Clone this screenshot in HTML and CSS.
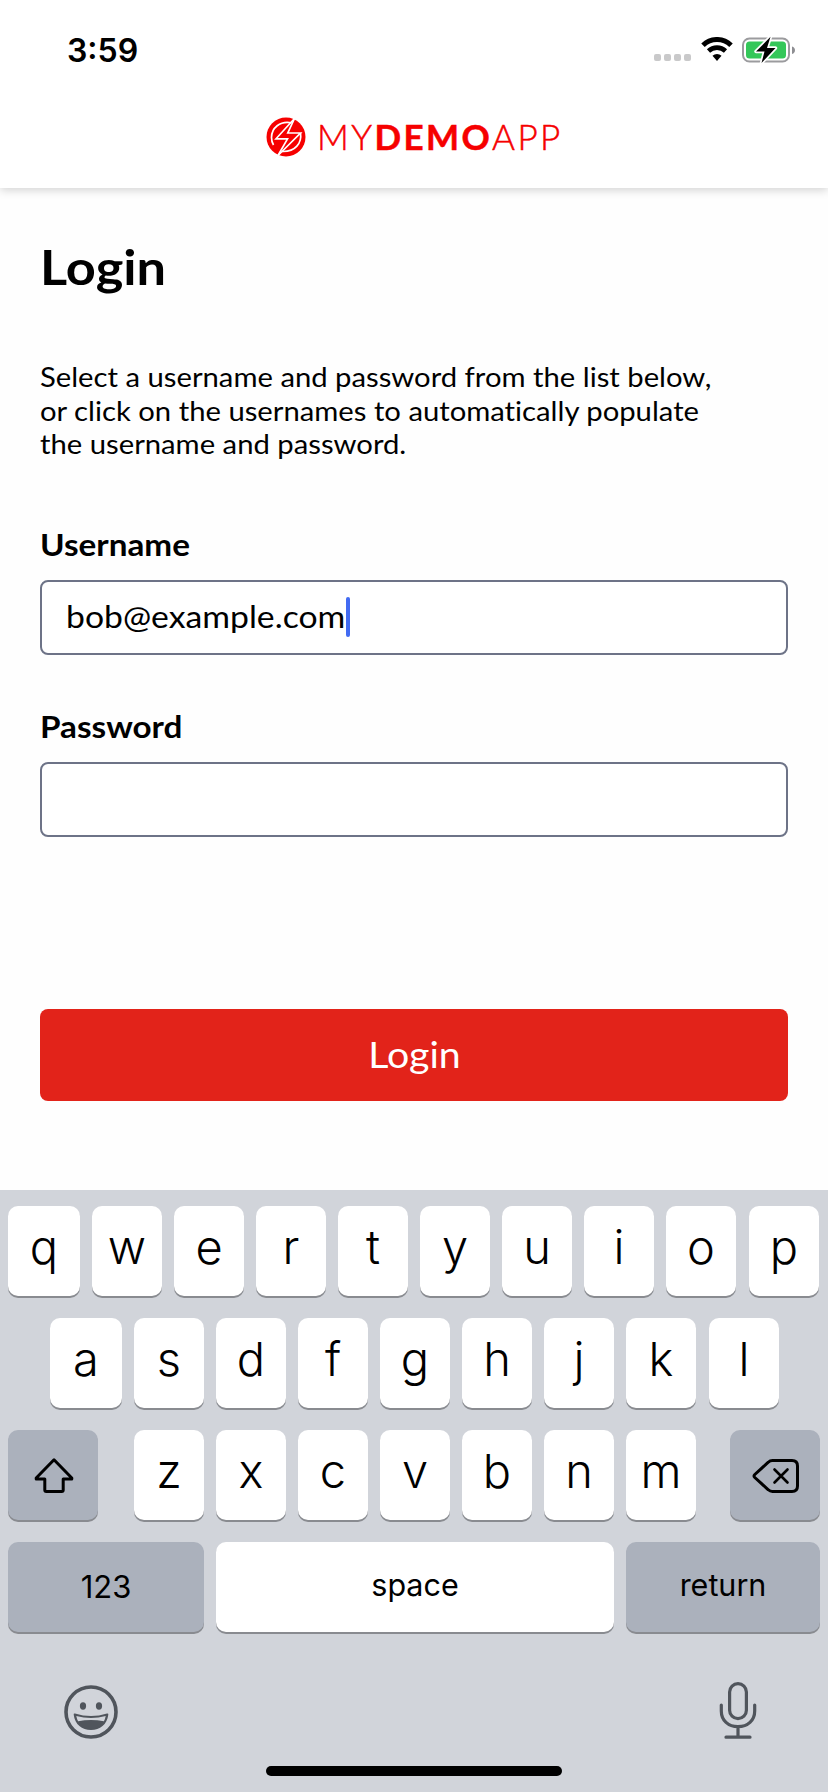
FILE: index.html
```html
<!DOCTYPE html>
<html lang="en">
<head>
<meta charset="utf-8">
<title>My Demo App</title>
<link rel="stylesheet" href="styles.css">
</head>
<body>
<div class="screen">
  <header class="header">
    <div class="status">
      <span class="time">3:59</span>
      <div class="indicators">
        <svg class="cell" width="37" height="7" viewBox="0 0 37 7" fill="#c9c9ca"><rect width="7" height="7" rx="2"/><rect x="10" width="7" height="7" rx="2"/><rect x="20" width="7" height="7" rx="2"/><rect x="30" width="7" height="7" rx="2"/></svg>
        <svg class="wifi" width="32" height="25" viewBox="0 0 32 25"><path d="M2 8.2a20 20 0 0 1 28 0" fill="none" stroke="#000" stroke-width="5"/><path d="M7.500 14a12.400 12.400 0 0 1 17 0" fill="none" stroke="#000" stroke-width="4.600"/><path d="M11.500 18.800a6.500 6.500 0 0 1 9 0L16 24z"/></svg>
        <svg class="battery" width="54" height="28" viewBox="0 0 54 28"><rect x="1" y="2.500" width="46" height="23" rx="6.500" fill="#fff" stroke="#9b9b9e" stroke-width="2"/><rect x="4" y="5.500" width="40" height="17" rx="3.500" fill="#34c759"/><path d="M50 10.500c4 1 4 6.500 0 7.500z" fill="#8e8e92"/><path d="M28.500.8L14 15.500h8.500L19.500 27 33.500 12H25z" fill="#000" stroke="#fff" stroke-width="3.400" stroke-linejoin="round" paint-order="stroke"/></svg>
      </div>
    </div>
    <div class="brand">
      <svg class="brand-mark" width="40" height="40" viewBox="0 0 40 40"><circle cx="20" cy="20" r="19.500" fill="#f60000"/><g fill="none" stroke="#fff" stroke-width="1.700"><path d="M28.500 1.500L10 21.800h11.500L12 38.500"/><path d="M28.500 1.500L21.800 16H34.500L12 38.500"/><path d="M25.500 5.800C14 3.500 5.500 11 5.500 20.500c0 3 .8 5.500 2 7.500"/><path d="M34.500 16c1.500 10-5 19-18.500 18.500"/></g></svg>
      <span class="wordmark">MY<b>DEMO</b>APP</span>
    </div>
  </header>
  <main class="content">
    <h1 class="title">Login</h1>
    <p class="intro">Select a username and password from the list below,<br>or click on the usernames to automatically populate<br>the username and password.</p>
    <div class="label user-label">Username</div>
    <div class="field"><span class="value">bob@example.com</span><i class="caret"></i></div>
    <div class="label pass-label">Password</div>
    <div class="field"></div>
    <div class="button"><span class="button-text">Login</span></div>
  </main>
  <section class="keyboard">
    <div class="row"><span class="key first">q</span><span class="key">w</span><span class="key">e</span><span class="key">r</span><span class="key">t</span><span class="key">y</span><span class="key">u</span><span class="key">i</span><span class="key">o</span><span class="key last">p</span></div>
    <div class="row home-row"><span class="key first">a</span><span class="key">s</span><span class="key">d</span><span class="key">f</span><span class="key">g</span><span class="key">h</span><span class="key">j</span><span class="key">k</span><span class="key last">l</span></div>
    <div class="row shift-row">
      <span class="key mod"><svg class="shift" width="40" height="36" viewBox="0 0 40 36"><path d="M20 1.800L2.200 20v1h8.600v11q0 1.500 1.500 1.500h15.400q1.500 0 1.500-1.500V21h8.600v-1z" fill="none" stroke="#000" stroke-width="3" stroke-linejoin="round"/></svg></span>
      <div class="letters"><span class="key">z</span><span class="key">x</span><span class="key">c</span><span class="key">v</span><span class="key">b</span><span class="key">n</span><span class="key">m</span></div>
      <span class="key mod"><svg class="shift" width="48" height="36" viewBox="0 0 48 36"><path d="M20.500 2.500H40q5.500 0 5.500 5.500v20q0 5.500-5.500 5.500H20.500q-2.500 0-4.200-1.700L2.800 19.500q-1.500-1.500 0-3L16.300 4.200q1.700-1.700 4.200-1.700z" fill="none" stroke="#000" stroke-width="3"/><path d="M22.500 11.500l13 13m0-13l-13 13" stroke="#000" stroke-width="2.600" stroke-linecap="round"/></svg></span>
    </div>
    <div class="row bottom-row"><span class="key mod num">123</span><span class="key space">space</span><span class="key mod ret">return</span></div>
    <div class="tools">
      <svg class="emoji" width="54" height="54" viewBox="0 0 54 54" fill="#50555c"><circle cx="27" cy="27" r="25" fill="none" stroke="#50555c" stroke-width="3.600"/><ellipse cx="19" cy="21" rx="3.100" ry="3.700"/><ellipse cx="35" cy="21" rx="3.100" ry="3.700"/><path d="M11 28.500q16 5 32 0 1.500-.4 1.300 1.200C43 39.500 36 45 27 45S11 39.500 9.700 29.700q-.2-1.600 1.300-1.200z"/><path d="M12.300 31q14.700 4 29.400 0-.5 3-1.800 5.300-12.900-2.800-25.800 0-1.300-2.300-1.800-5.300z" fill="#d1d4da"/></svg>
      <svg class="mic" width="38" height="58" viewBox="0 0 38 58" fill="none" stroke="#50555c" stroke-width="3.200" stroke-linecap="round"><rect x="10.600" y="2.600" width="16.800" height="35" rx="8.400"/><path d="M2.300 24v6c0 9.500 7 15.700 16.700 15.700S35.700 39.500 35.700 30v-6M19 46v10M7 56.200h24"/></svg>
    </div>
    <div class="home-bar"></div>
  </section>
</div>
</body>
</html>
```
FILE: styles.css
```css
* { box-sizing: border-box; }
body { margin: 0; background: #fff; color: #000; }
.screen { width: 828px; height: 1792px; display: flex; flex-direction: column; overflow: hidden; font-family: Lato, sans-serif; background: #fefefe; }
.header { height: 188px; background: #fff; box-shadow: 0 2px 9px rgba(0,0,0,.18); flex: none; }
.status { height: 100px; display: flex; justify-content: space-between; padding: 0 32px 0 67px; }
.time { font: 600 32px/40px Inter, sans-serif; padding-top: 31px; }
.indicators { display: flex; align-items: flex-start; }
.cell { margin: 54px 10px 0 0; }
.wifi { margin: 37px 9px 0 0; }
.battery { margin-top: 36px; }
.brand { height: 74px; display: flex; align-items: center; padding-left: 266px; gap: 11px; color: #f60000; }
.brand-mark { flex: none; }
.wordmark { font-size: 35px; line-height: 38px; padding-bottom: 2px; font-weight: 300; letter-spacing: 2.4px; white-space: nowrap; -webkit-text-stroke: .5px #f60000; }
.wordmark b { font-weight: 700; }
.content { height: 1002px; padding: 49px 40px 0; flex: none; }
.title, .intro, .label, .value { font-variant-ligatures: none; transform-origin: 0 50%; }
.title { margin: 0; font-size: 48px; line-height: 60px; font-weight: 700; transform: scaleX(1.09); }
.intro { margin: 63px 0 0; font-size: 27px; line-height: 33.5px; white-space: nowrap; transform: scaleX(1.083); }
.label { font-size: 31px; line-height: 40px; font-weight: 700; transform: scaleX(1.072); }
.user-label { margin-top: 63px; }
.pass-label { margin-top: 51px; }
.field { height: 75px; margin-top: 16px; border: 2px solid #6d7387; border-radius: 8px; padding-left: 24px; display: flex; align-items: center; background: #fff; }
.value { width: 280px; font-size: 31px; line-height: 38px; padding-bottom: 2px; white-space: nowrap; transform: scaleX(1.088); }
.caret { width: 4px; height: 40px; border-radius: 2px; background: #426bf2; }
.button { height: 92px; margin-top: 172px; border-radius: 8px; background: #e2231a; color: #fff; font-size: 36px; line-height: 90px; text-align: center; }
.button-text { display: inline-block; transform: scaleX(1.09); }
.keyboard { height: 602px; flex: none; background: #d1d4da; padding: 16px 8px 0; font-family: Inter, sans-serif; display: flex; flex-direction: column; }
.row { display: flex; gap: 12px; height: 90px; margin-bottom: 22px; }
.key { width: 70px; height: 90px; flex: none; border-radius: 10px; background: #fff; box-shadow: 0 2px 0 #898b90; display: flex; justify-content: center; font-size: 47px; line-height: 82px; font-weight: 350; }
.first { width: 72px; }
.last { margin-left: 1px; }
.home-row { padding-left: 42px; }
.shift-row { justify-content: space-between; }
.letters { display: flex; gap: 12px; margin-left: 2px; }
.mod { background: #abb1bc; }
.shift-row .mod { width: 90px; align-items: center; }
.shift { margin: 1px 0 0 1px; }
.bottom-row .key { font-size: 30.5px; line-height: 86px; font-weight: 400; }
.bottom-row .num { width: 196px; font-size: 31px; line-height: 89px; }
.bottom-row .space { width: 398px; }
.bottom-row .ret { width: 194px; }
.tools { height: 112px; display: flex; justify-content: space-between; align-items: center; padding: 4px 63px 0 56px; margin-top: -1px; }
.emoji { margin-top: 2px; }
.mic { margin-bottom: 2px; }
.home-bar { width: 296px; height: 10px; border-radius: 5px; background: #000; margin: 1px 0 0 258px; }
```
